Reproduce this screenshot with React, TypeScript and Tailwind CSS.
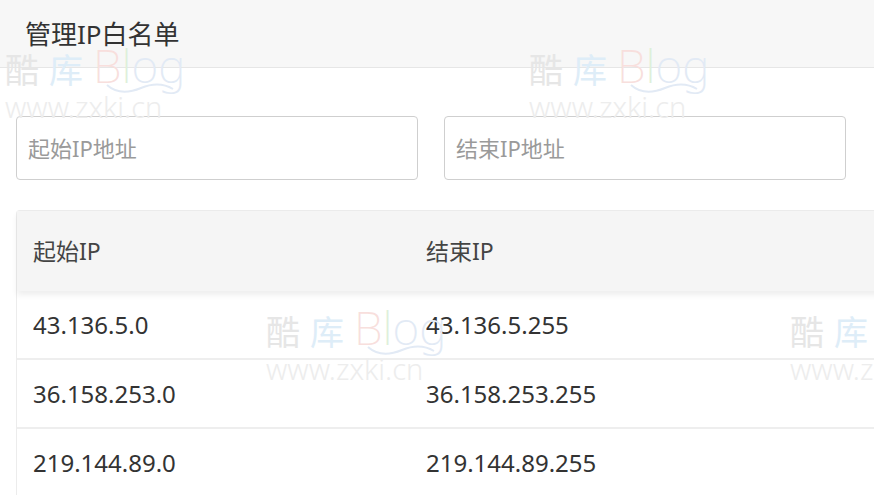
import React from "react";

const rows = [
  { start: "43.136.5.0", end: "43.136.5.255" },
  { start: "36.158.253.0", end: "36.158.253.255" },
  { start: "219.144.89.0", end: "219.144.89.255" },
];

// faint blog watermark that lies over the page
function Watermark({ x, y }: { x: number; y: number }) {
  return (
    <div
      className="absolute pointer-events-none select-none leading-none"
      style={{ left: x, top: y }}
    >
      <div className="flex items-baseline h-[40px] overflow-visible">
        <span className="text-[34px] leading-[34px] text-[#e6e6e6]">酷</span>
        <span className="ml-[10px] text-[34px] leading-[34px] text-[#deedf8]">库</span>
        <span className="ml-[10px] text-[46px] leading-[34px] font-extralight text-[#f8dfdd]">B</span>
        <span className="text-[46px] leading-[34px] font-extralight text-[#def0da]">l</span>
        <span className="text-[46px] leading-[34px] font-extralight text-[#e2eaf5]">og</span>
      </div>
      <svg
        width="70"
        height="12"
        viewBox="0 0 70 12"
        className="absolute left-[100px] top-[34px]"
      >
        <path
          d="M2 3 C 12 12, 24 11, 36 6 S 58 1, 68 7"
          fill="none"
          stroke="#e2eaf5"
          strokeWidth="2"
        />
      </svg>
      <div className="mt-[6px] text-[29px] leading-[26px] font-light text-[#ededed]">
        www.zxki.cn
      </div>
    </div>
  );
}

export default function App() {
  return (
    <div
      className="relative w-[874px] h-[495px] overflow-hidden bg-white"
      style={{ fontFamily: '"Noto Sans", "Noto Sans CJK SC", sans-serif' }}
    >
      {/* Header */}
      <div className="h-[68px] bg-[#f7f7f7] border-b border-[#e6e6e6] flex items-center pl-[25px]">
        <h1 className="text-[26px] text-[#333] leading-none">管理IP白名单</h1>
      </div>

      {/* Inputs */}
      <div className="grid grid-cols-2 gap-[26px] pl-[16px] pr-[28px] mt-[48px]">
        <input
          className="h-[64px] w-full rounded-[4px] border border-[#cfcfcf] px-[11px] text-[22px] text-[#333] placeholder:text-[#9a9a9a] outline-none bg-transparent"
          placeholder="起始IP地址"
        />
        <input
          className="h-[64px] w-full rounded-[4px] border border-[#cfcfcf] px-[11px] text-[22px] text-[#333] placeholder:text-[#9a9a9a] outline-none bg-transparent"
          placeholder="结束IP地址"
        />
      </div>

      {/* Table */}
      <div className="ml-[16px] mt-[30px] w-[1000px] border-l border-t border-[#ececec] rounded-tl-[4px]">
        <div className="relative z-10 h-[80px] bg-[#f5f5f5] flex items-center shadow-[0_4px_6px_rgba(0,0,0,0.07)] text-[23px] text-[#444]">
          <div className="w-[393px] pl-[16px]">起始IP</div>
          <div className="w-[393px] pl-[16px]">结束IP</div>
        </div>
        {rows.map((r) => (
          <div
            key={r.start}
            className="h-[69px] flex items-center border-b-2 border-[#eeeeee] text-[24px] text-[#333]"
          >
            <div className="w-[393px] pl-[16px]">{r.start}</div>
            <div className="w-[393px] pl-[16px]">{r.end}</div>
          </div>
        ))}
      </div>

      {/* Watermarks */}
      <Watermark x={5} y={48} />
      <Watermark x={529} y={48} />
      <Watermark x={266} y={310} />
      <Watermark x={790} y={310} />
    </div>
  );
}
